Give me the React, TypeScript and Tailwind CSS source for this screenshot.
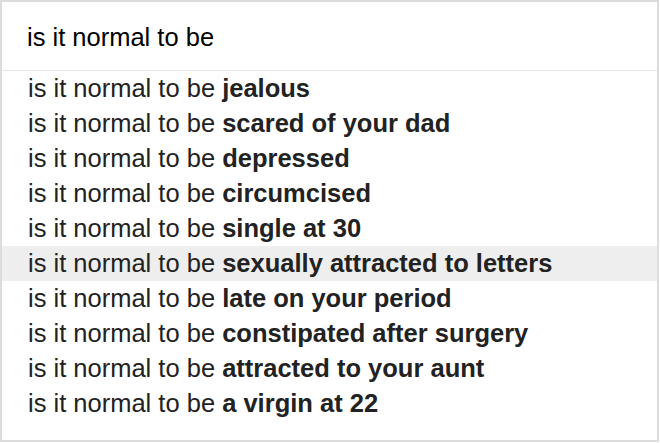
import React from "react";

const items = [
  "jealous",
  "scared of your dad",
  "depressed",
  "circumcised",
  "single at 30",
  "sexually attracted to letters",
  "late on your period",
  "constipated after surgery",
  "attracted to your aunt",
  "a virgin at 22",
];

export default function App() {
  return (
    <div className="w-[660px] h-[443px] bg-white" style={{ fontFamily: '"Liberation Sans", Arial, sans-serif' }}>
      <div className="w-[659px] h-[442px] border-2 border-[#dcdcdc] flex flex-col">
        <div className="h-[69px] border-b border-[#e3e3e3] pl-[25px] pt-[18px] text-[25.5px] leading-[35px] text-black">
          is it normal to be
        </div>
        <div className="flex flex-col">
          {items.map((t, i) => (
            <div
              key={i}
              className={`h-[35px] leading-[35px] pl-[26px] text-[25.5px] text-[#222] whitespace-nowrap ${i === 5 ? "bg-[#eeeeee]" : ""}`}
            >
              is it normal to be <b className="font-bold">{t}</b>
            </div>
          ))}
        </div>
      </div>
    </div>
  );
}
